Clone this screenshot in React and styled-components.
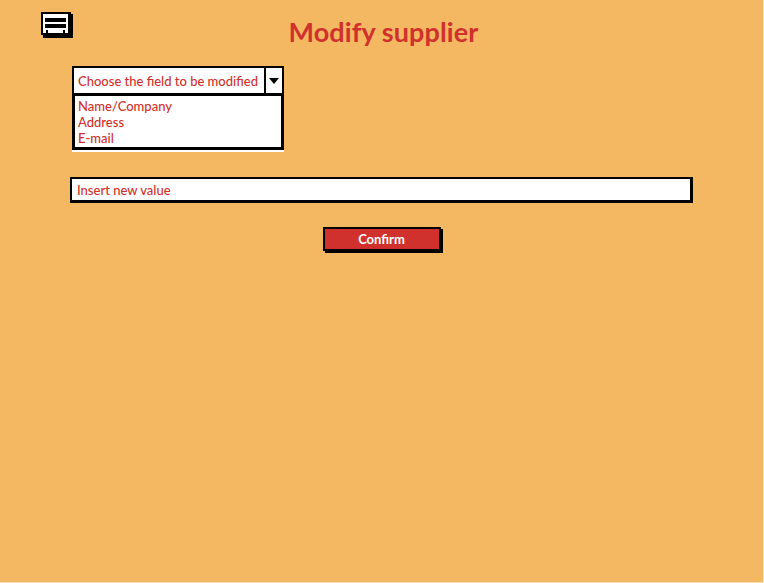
import React from "react";
import styled, { createGlobalStyle } from "styled-components";

const Global = createGlobalStyle`
  html, body { margin: 0; padding: 0; background: #f3b861; }
  body { font-family: "Lato", "Noto Sans", sans-serif; }
`;

const Page = styled.div`
  width: 763px;
  height: 582px;
  background: #f3b861;
  border-right: 1px solid #fbe3c0;
  border-bottom: 1px solid #fbe3c0;
  display: flex;
  flex-direction: column;
  position: relative;
`;

const Header = styled.div`
  height: 66px;
  display: flex;
  align-items: flex-start;
  justify-content: center;
  position: relative;
`;

const MenuButton = styled.div`
  position: absolute;
  left: 40px;
  top: 11px;
  width: 34px;
  height: 28px;
`;

const Title = styled.h1`
  margin: 15px 0 0 4px;
  font-family: "Lato", sans-serif;
  font-weight: 700;
  font-size: 27px;
  letter-spacing: 0.1px;
  line-height: 34px;
  color: #d0312d;
`;

const Content = styled.div`
  display: flex;
  flex-direction: column;
  padding-left: 70px;
`;

const Select = styled.div`
  margin-left: 2px;
  width: 212px;
  display: flex;
  flex-direction: column;
`;

const SelectHead = styled.div`
  height: 27px;
  display: flex;
  box-sizing: border-box;
  border: 2px solid #000;
  border-bottom: none;
  background: #fff;
`;

const SelectText = styled.div`
  flex: 1;
  font-size: 13px;
  color: #d0312d;
  padding-left: 4px;
  display: flex;
  align-items: center;
  font-weight: 500;
  border-right: 2px solid #000;
`;

const Arrow = styled.div`
  width: 16px;
  display: flex;
  align-items: center;
  justify-content: center;
  &::after {
    content: "";
    border-left: 5px solid transparent;
    border-right: 5px solid transparent;
    border-top: 6px solid #000;
  }
`;

const List = styled.div`
  box-sizing: border-box;
  height: 57px;
  border: 3px solid #000;
  background: #fff;
  padding: 2px 3px;
  display: flex;
  flex-direction: column;
  box-shadow: 0 2px 0 #fff;
`;

const Item = styled.div`
  font-size: 13px;
  line-height: 16px;
  color: #d0312d;
  font-weight: 500;
`;

const Input = styled.div`
  margin-top: 27px;
  width: 623px;
  height: 26px;
  box-sizing: border-box;
  border: 2px solid #000;
  border-right-width: 3px;
  border-bottom-width: 3px;
  background: #fff;
  font-size: 13px;
  color: #d0312d;
  padding-left: 5px;
  display: flex;
  align-items: center;
  font-weight: 500;
`;

const ButtonRow = styled.div`
  margin-top: 24px;
  display: flex;
  justify-content: center;
  width: 623px;
`;

const Button = styled.div`
  width: 118px;
  height: 24px;
  box-sizing: border-box;
  background: #d0312d;
  border: 2px solid #000;
  box-shadow: 2px 2px 0 #000;
  color: #fff;
  font-weight: 700;
  font-size: 13px;
  display: flex;
  align-items: center;
  justify-content: center;
`;

function MenuIcon() {
  return (
    <svg width="34" height="28" viewBox="0 0 34 28">
      <rect x="3" y="3" width="30" height="24" fill="#000" />
      <rect x="1" y="1" width="30" height="23" fill="#000" />
      <rect x="3" y="3" width="25" height="19" fill="#fff" />
      <rect x="5" y="7" width="21" height="4" fill="#000" />
      <rect x="5" y="13" width="21" height="4" fill="#000" />
      <rect x="6" y="19" width="2" height="4" fill="#000" />
      <rect x="23" y="19" width="2" height="4" fill="#000" />
    </svg>
  );
}

export default function App() {
  return (
    <>
      <Global />
      <Page>
        <Header>
          <MenuButton>
            <MenuIcon />
          </MenuButton>
          <Title>Modify supplier</Title>
        </Header>
        <Content>
          <Select>
            <SelectHead>
              <SelectText>Choose the field to be modified</SelectText>
              <Arrow />
            </SelectHead>
            <List>
              <Item>Name/Company</Item>
              <Item>Address</Item>
              <Item>E-mail</Item>
            </List>
          </Select>
          <Input>Insert new value</Input>
          <ButtonRow>
            <Button>Confirm</Button>
          </ButtonRow>
        </Content>
      </Page>
    </>
  );
}
